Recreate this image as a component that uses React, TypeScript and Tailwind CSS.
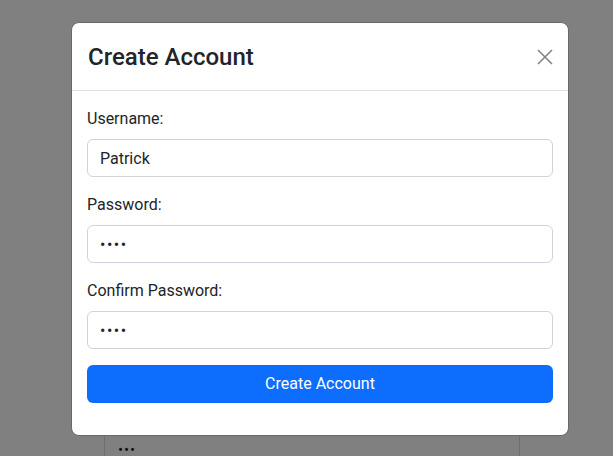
import React from "react";

const font = { fontFamily: 'Roboto, "Noto Sans", sans-serif' };

function Field({ label, type, value }: { label: string; type: string; value: string }) {
  return (
    <div className="mb-4">
      <label className="block mb-2 text-base leading-6 text-[#212529]">{label}</label>
      <input
        type={type}
        value={value}
        readOnly
        className={
          type === "password"
            ? "block w-full h-[38px] px-3 rounded-[6px] border border-[#ced4da] bg-white text-base tracking-[1.5px] text-[#212529] outline-none"
            : "block w-full h-[38px] px-3 rounded-[6px] border border-[#ced4da] bg-white text-base text-[#212529] outline-none"
        }
      />
    </div>
  );
}

export default function App() {
  return (
    <div className="relative w-[613px] h-[456px] overflow-hidden bg-[#808080]" style={font}>
      {/* page behind the backdrop */}
      <div className="ml-[104px] w-[416px] mt-[120px] pt-[325px] h-full border-x border-[#6f6f6f]">
        <div className="pl-[13px] text-[#101214] text-[15px] leading-[10px] tracking-[1px]">•••</div>
      </div>

      {/* modal */}
      <div className="absolute left-[71px] top-[22px] w-[498px] bg-white rounded-[8px] border border-[#696969]">
        <div className="flex items-center justify-between pl-4 pr-[15px] h-[68px] border-b border-[#dee2e6]">
          <h4 className="text-2xl font-medium leading-9 text-[#212529]">Create Account</h4>
          <button className="w-4 h-4 flex items-center justify-center">
            <svg width="16" height="16" viewBox="0 0 16 16" fill="none">
              <path d="M1 1L15 15M15 1L1 15" stroke="#808080" strokeWidth="1.5" />
            </svg>
          </button>
        </div>
        <div className="p-4 pl-[15px] pr-[15px]">
          <Field label="Username:" type="text" value="Patrick" />
          <Field label="Password:" type="password" value="abcd" />
          <Field label="Confirm Password:" type="password" value="abcd" />
          <div className="mb-4">
            <button className="w-full h-[38px] rounded-[6px] bg-[#0d6efd] text-white text-base">
              Create Account
            </button>
          </div>
        </div>
      </div>
    </div>
  );
}
